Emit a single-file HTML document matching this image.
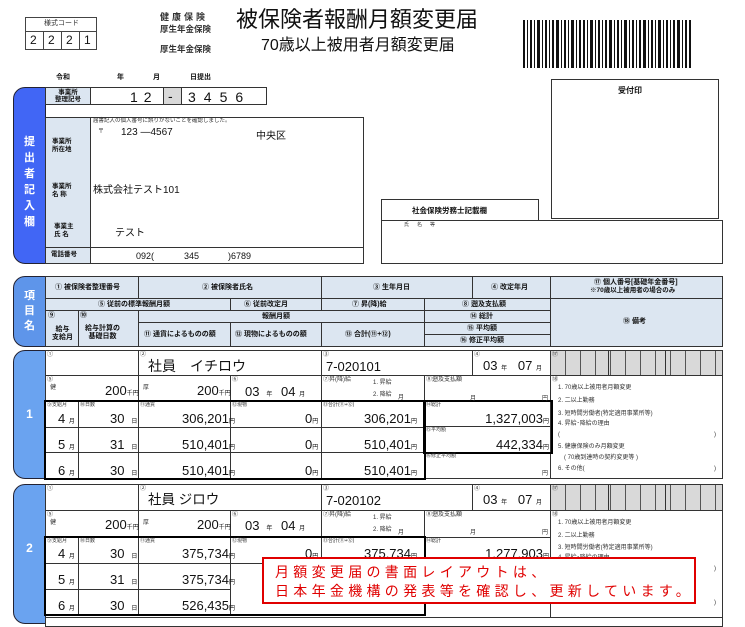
<!DOCTYPE html>
<html><head><meta charset="utf-8"><style>
*{box-sizing:border-box;margin:0;padding:0}
body{width:745px;height:618px;background:#fff;position:relative;overflow:hidden;font-family:"Liberation Sans","Noto Sans CJK JP",sans-serif;color:#111}
div{position:absolute}
.c{border:1px solid #333;background:#fff}
.h{background:#dce6f1}
.t{white-space:nowrap;font-size:7px;font-weight:bold;line-height:1}
.s{font-size:6px;line-height:1;white-space:nowrap;color:#333}
.v{font-size:14px;line-height:1;white-space:nowrap}
.n{font-size:13px;line-height:1;white-space:nowrap}
.r{font-size:13px;line-height:1;white-space:nowrap;text-align:right}
.u{font-size:6px}
.tab{border:1.5px solid #223;border-radius:12px 0 0 12px;color:#fff;font-weight:bold;text-align:center}
.g{background:#d9d9d9 repeating-linear-gradient(90deg,transparent 0 14px,#555 14px 15px)}
.thick{border:2.5px solid #000;background:transparent}
</style></head><body>

<!-- form code -->
<div class="c" style="left:25px;top:17px;width:72px;height:33px;border-color:#444"></div>
<div class="s" style="left:44px;top:20px;font-size:7px">様式コード</div>
<div style="left:25px;top:31px;width:72px;border-top:1px solid #444"></div>
<div style="left:43px;top:31px;height:18px;border-left:1px solid #444"></div>
<div style="left:61px;top:31px;height:18px;border-left:1px solid #444"></div>
<div style="left:79px;top:31px;height:18px;border-left:1px solid #444"></div>
<div class="n" style="left:30px;top:34px;font-size:12px">2</div>
<div class="n" style="left:48px;top:34px;font-size:12px">2</div>
<div class="n" style="left:66px;top:34px;font-size:12px">2</div>
<div class="n" style="left:84px;top:34px;font-size:12px">1</div>

<div class="t" style="left:160px;top:13px;font-size:9px;letter-spacing:3px;color:#333">健康保険</div>
<div class="t" style="left:160px;top:25px;font-size:8.5px;color:#333">厚生年金保険</div>
<div class="t" style="left:160px;top:45px;font-size:8.5px;color:#333">厚生年金保険</div>
<div style="left:236px;top:9px;font-size:22px;white-space:nowrap;line-height:1">被保険者報酬月額変更届</div>
<div style="left:261px;top:38px;font-size:16px;white-space:nowrap;line-height:1">70歳以上被用者月額変更届</div>

<!-- barcode -->
<svg style="position:absolute;left:523px;top:20px" width="168" height="48">
<g fill="#111">
<rect x="0" y="0" width="2" height="48"/><rect x="4" y="0" width="1" height="48"/><rect x="7" y="0" width="2" height="48"/><rect x="11" y="0" width="1" height="48"/><rect x="14" y="0" width="3" height="48"/><rect x="19" y="0" width="1" height="48"/><rect x="22" y="0" width="2" height="48"/><rect x="26" y="0" width="1" height="48"/><rect x="29" y="0" width="2" height="48"/><rect x="33" y="0" width="3" height="48"/><rect x="38" y="0" width="1" height="48"/><rect x="41" y="0" width="2" height="48"/><rect x="45" y="0" width="1" height="48"/><rect x="48" y="0" width="3" height="48"/><rect x="53" y="0" width="1" height="48"/><rect x="56" y="0" width="2" height="48"/><rect x="60" y="0" width="2" height="48"/><rect x="64" y="0" width="1" height="48"/><rect x="67" y="0" width="3" height="48"/><rect x="72" y="0" width="1" height="48"/><rect x="75" y="0" width="2" height="48"/><rect x="79" y="0" width="1" height="48"/><rect x="82" y="0" width="2" height="48"/><rect x="86" y="0" width="3" height="48"/><rect x="91" y="0" width="1" height="48"/><rect x="94" y="0" width="2" height="48"/><rect x="98" y="0" width="1" height="48"/><rect x="101" y="0" width="3" height="48"/><rect x="106" y="0" width="1" height="48"/><rect x="109" y="0" width="2" height="48"/><rect x="113" y="0" width="1" height="48"/><rect x="116" y="0" width="2" height="48"/><rect x="120" y="0" width="3" height="48"/><rect x="125" y="0" width="1" height="48"/><rect x="128" y="0" width="2" height="48"/><rect x="132" y="0" width="1" height="48"/><rect x="135" y="0" width="3" height="48"/><rect x="140" y="0" width="1" height="48"/><rect x="143" y="0" width="2" height="48"/><rect x="147" y="0" width="1" height="48"/><rect x="150" y="0" width="2" height="48"/><rect x="154" y="0" width="3" height="48"/><rect x="159" y="0" width="1" height="48"/><rect x="162" y="0" width="2" height="48"/><rect x="166" y="0" width="2" height="48"/>
</g></svg>

<div class="t" style="left:56px;top:74px">令和</div>
<div class="t" style="left:117px;top:74px">年</div>
<div class="t" style="left:153px;top:74px">月</div>
<div class="t" style="left:190px;top:74px">日提出</div>

<!-- submitter tab -->
<div class="tab" style="left:13px;top:87px;width:33px;height:177px;background:#4166f5;font-size:11px;line-height:16px;padding-top:46px">提<br>出<br>者<br>記<br>入<br>欄</div>

<div class="c h" style="left:45px;top:87px;width:46px;height:18px"></div>
<div class="t" style="left:50px;top:89px;font-size:6.5px;line-height:7px;text-align:center;width:36px">事業所<br>整理記号</div>
<div class="c" style="left:90px;top:87px;width:74px;height:18px"></div>
<div class="v" style="left:130px;top:90px;letter-spacing:6px">12</div>
<div class="c" style="left:163px;top:87px;width:19px;height:18px;background:#d9d9d9"></div>
<div class="v" style="left:168px;top:89px">-</div>
<div class="c" style="left:181px;top:87px;width:86px;height:18px"></div>
<div class="v" style="left:188px;top:90px;letter-spacing:8px">3456</div>

<div class="c" style="left:45px;top:117px;width:319px;height:147px"></div>
<div class="c h" style="left:45px;top:117px;width:46px;height:147px"></div>
<div style="left:45px;top:247px;width:319px;border-top:1px solid #333"></div>
<div class="t" style="left:52px;top:138px;line-height:8px;font-size:6.5px">事業所<br>所在地</div>
<div class="t" style="left:52px;top:183px;line-height:8px;font-size:6.5px">事業所<br>名 称</div>
<div class="t" style="left:54px;top:223px;line-height:8px;font-size:6.5px">事業主<br>氏 名</div>
<div class="t" style="left:51px;top:252px;font-size:6.5px">電話番号</div>
<div class="s" style="left:93px;top:119px;font-size:5.5px">届書記入の個人番号に誤りがないことを確認しました。</div>
<div class="s" style="left:98px;top:129px">〒</div>
<div style="left:121px;top:127px;font-size:10px;white-space:nowrap">123 ―4567</div>
<div style="left:256px;top:127px;font-size:10px;white-space:nowrap">中央区</div>
<div style="left:93px;top:181px;font-size:10px;white-space:nowrap">株式会社テスト101</div>
<div style="left:115px;top:224px;font-size:10px;white-space:nowrap">テスト</div>
<div style="left:136px;top:251px;font-size:9px;white-space:nowrap">092(</div>
<div style="left:184px;top:251px;font-size:9px;white-space:nowrap">345</div>
<div style="left:228px;top:251px;font-size:9px;white-space:nowrap">)6789</div>

<!-- stamp box -->
<div class="c" style="left:551px;top:79px;width:168px;height:140px"></div>
<div class="t" style="left:618px;top:87px;font-size:8px">受付印</div>
<div class="c" style="left:381px;top:199px;width:158px;height:23px"></div>
<div class="t" style="left:412px;top:207px;font-size:7.5px">社会保険労務士記載欄</div>
<div class="c" style="left:381px;top:220px;width:342px;height:44px"></div>
<div class="s" style="left:404px;top:223px;font-size:5px;letter-spacing:8px">氏名等</div>

<!-- header table -->
<div class="tab" style="left:13px;top:276px;width:33px;height:71px;background:#5e95ea;font-size:11px;line-height:15px;padding-top:12px">項<br>目<br>名</div>
<div class="c h" style="left:45px;top:276px;width:678px;height:71px"></div>
<div class="c h" style="left:45px;top:276px;width:94px;height:23px"></div>
<div class="c h" style="left:138px;top:276px;width:184px;height:23px"></div>
<div class="c h" style="left:321px;top:276px;width:152px;height:23px"></div>
<div class="c h" style="left:472px;top:276px;width:79px;height:23px"></div>
<div class="c h" style="left:550px;top:276px;width:173px;height:23px"></div>
<div class="c h" style="left:45px;top:298px;width:186px;height:13px"></div>
<div class="c h" style="left:230px;top:298px;width:92px;height:13px"></div>
<div class="c h" style="left:321px;top:298px;width:104px;height:13px"></div>
<div class="c h" style="left:424px;top:298px;width:127px;height:13px"></div>
<div class="c h" style="left:550px;top:298px;width:173px;height:49px"></div>
<div class="c h" style="left:45px;top:310px;width:34px;height:37px"></div>
<div class="c h" style="left:78px;top:310px;width:61px;height:37px"></div>
<div class="c h" style="left:138px;top:310px;width:287px;height:13px"></div>
<div class="c h" style="left:424px;top:310px;width:127px;height:13px"></div>
<div class="c h" style="left:138px;top:322px;width:93px;height:25px"></div>
<div class="c h" style="left:230px;top:322px;width:92px;height:25px"></div>
<div class="c h" style="left:321px;top:322px;width:104px;height:25px"></div>
<div class="c h" style="left:424px;top:322px;width:127px;height:13px"></div>
<div class="c h" style="left:424px;top:334px;width:127px;height:13px"></div>
<div class="t" style="left:55px;top:284px">① 被保険者整理番号</div>
<div class="t" style="left:202px;top:284px">② 被保険者氏名</div>
<div class="t" style="left:373px;top:284px">③ 生年月日</div>
<div class="t" style="left:491px;top:284px">④ 改定年月</div>
<div class="t" style="left:594px;top:279px">⑰ 個人番号[基礎年金番号]</div>
<div class="t" style="left:590px;top:288px;font-size:6.5px">※70歳以上被用者の場合のみ</div>
<div class="t" style="left:98px;top:301px">⑤ 従前の標準報酬月額</div>
<div class="t" style="left:244px;top:301px">⑥ 従前改定月</div>
<div class="t" style="left:352px;top:301px">⑦ 昇(降)給</div>
<div class="t" style="left:462px;top:301px">⑧ 遡及支払額</div>
<div class="t" style="left:48px;top:312px">⑨</div>
<div class="t" style="left:80px;top:312px">⑩</div>
<div class="t" style="left:262px;top:313px">報酬月額</div>
<div class="t" style="left:470px;top:313px">⑭ 総計</div>
<div class="t" style="left:52px;top:326px;line-height:8px;text-align:center">給与<br>支給月</div>
<div class="t" style="left:85px;top:325px;line-height:8px;text-align:center">給与計算の<br>基礎日数</div>
<div class="t" style="left:144px;top:331px">⑪ 通貨によるものの額</div>
<div class="t" style="left:235px;top:331px">⑫ 現物によるものの額</div>
<div class="t" style="left:345px;top:331px">⑬ 合計(⑪+⑫)</div>
<div class="t" style="left:467px;top:325px">⑮ 平均額</div>
<div class="t" style="left:460px;top:337px">⑯ 修正平均額</div>
<div class="t" style="left:623px;top:318px">⑱ 備考</div>

<!-- SECTION 1 -->
<div class="tab" style="left:13px;top:350px;width:33px;height:129px;background:#6aa3f0;font-size:12px;padding-top:56px">1</div>
<div class="c" style="left:45px;top:350px;width:94px;height:26px"></div>
<div class="c" style="left:138px;top:350px;width:184px;height:26px"></div>
<div class="c" style="left:321px;top:350px;width:152px;height:26px"></div>
<div class="c" style="left:472px;top:350px;width:79px;height:26px"></div>
<div class="c g" style="left:550px;top:350px;width:173px;height:26px"></div>
<div style="left:608px;top:350px;height:26px;border-left:1.5px solid #333"></div>
<div style="left:665px;top:350px;height:26px;border-left:1.5px solid #333"></div>
<div class="c" style="left:45px;top:375px;width:94px;height:27px"></div>
<div class="c" style="left:138px;top:375px;width:93px;height:27px"></div>
<div class="c" style="left:230px;top:375px;width:92px;height:27px"></div>
<div class="c" style="left:321px;top:375px;width:104px;height:27px"></div>
<div class="c" style="left:424px;top:375px;width:127px;height:27px"></div>
<div class="c" style="left:550px;top:375px;width:173px;height:104px"></div>
<div class="c" style="left:45px;top:401px;width:34px;height:27px"></div><div class="c" style="left:78px;top:401px;width:61px;height:27px"></div><div class="c" style="left:138px;top:401px;width:93px;height:27px"></div><div class="c" style="left:230px;top:401px;width:92px;height:27px"></div><div class="c" style="left:321px;top:401px;width:104px;height:27px"></div>
<div class="c" style="left:45px;top:427px;width:34px;height:26px"></div><div class="c" style="left:78px;top:427px;width:61px;height:26px"></div><div class="c" style="left:138px;top:427px;width:93px;height:26px"></div><div class="c" style="left:230px;top:427px;width:92px;height:26px"></div><div class="c" style="left:321px;top:427px;width:104px;height:26px"></div>
<div class="c" style="left:45px;top:452px;width:34px;height:27px"></div><div class="c" style="left:78px;top:452px;width:61px;height:27px"></div><div class="c" style="left:138px;top:452px;width:93px;height:27px"></div><div class="c" style="left:230px;top:452px;width:92px;height:27px"></div><div class="c" style="left:321px;top:452px;width:104px;height:27px"></div>
<div class="c" style="left:424px;top:401px;width:127px;height:26px"></div>
<div class="c" style="left:424px;top:426px;width:127px;height:27px"></div>
<div class="c" style="left:424px;top:452px;width:127px;height:27px"></div>
<div class="thick" style="left:44px;top:400px;width:382px;height:80px"></div>
<div class="thick" style="left:423px;top:400px;width:130px;height:54px"></div>
<div class="s" style="left:47px;top:352px">①</div><div class="s" style="left:140px;top:352px">②</div><div class="s" style="left:323px;top:352px">③</div><div class="s" style="left:474px;top:352px">④</div><div class="s" style="left:552px;top:352px">⑰</div>
<div class="v" style="left:148px;top:359px">社員　イチロウ</div>
<div class="n" style="left:326px;top:360px">7-020101</div>
<div class="n" style="left:483px;top:359px">03 <span class="u">年</span>&nbsp;&nbsp; 07 <span class="u">月</span></div>
<div class="s" style="left:47px;top:377px">⑤</div><div class="s" style="left:50px;top:385px">健</div>
<div class="n" style="left:105px;top:384px">200<span class="u">千円</span></div>
<div class="s" style="left:143px;top:385px">厚</div>
<div class="n" style="left:197px;top:384px">200<span class="u">千円</span></div>
<div class="s" style="left:232px;top:377px">⑥</div>
<div class="n" style="left:245px;top:385px">03 <span class="u">&nbsp;&nbsp;年&nbsp;&nbsp;&nbsp;</span> 04 <span class="u">月</span></div>
<div class="s" style="left:323px;top:377px">⑦昇(降)給</div><div class="s" style="left:373px;top:380px">1. 昇給</div><div class="s" style="left:373px;top:392px">2. 降給</div><div class="s" style="left:398px;top:395px">月</div>
<div class="s" style="left:426px;top:377px">⑧遡及支払額</div><div class="s" style="left:470px;top:396px">月</div><div class="s" style="left:542px;top:396px">円</div>
<div class="s" style="left:552px;top:377px">⑱</div>
<div class="s" style="left:558px;top:385px">1. 70歳以上被用者月額変更</div>
<div class="s" style="left:558px;top:398px">2. 二以上勤務</div>
<div class="s" style="left:558px;top:411px">3. 短時間労働者(特定適用事業所等)</div>
<div class="s" style="left:558px;top:421px">4. 昇給･降給の理由</div>
<div class="s" style="left:558px;top:432px">(</div><div class="s" style="left:714px;top:432px">)</div>
<div class="s" style="left:558px;top:444px">5. 健康保険のみ月額変更</div>
<div class="s" style="left:564px;top:455px">( 70歳到達時の契約変更等 )</div>
<div class="s" style="left:558px;top:466px">6. その他(</div><div class="s" style="left:714px;top:466px">)</div>
<div class="s" style="left:47px;top:403px;font-size:5px">⑨支給月</div><div class="s" style="left:80px;top:403px;font-size:5px">⑩日数</div><div class="s" style="left:140px;top:403px;font-size:5px">⑪通貨</div><div class="s" style="left:232px;top:403px;font-size:5px">⑫現物</div><div class="s" style="left:323px;top:403px;font-size:5px">⑬合計(⑪+⑫)</div><div class="s" style="left:426px;top:403px;font-size:5px">⑭総計</div>
<div class="n" style="left:58px;top:412px">4 <span class="u">月</span></div><div class="n" style="left:110px;top:412px">30 <span class="u">&nbsp;&nbsp;日</span></div>
<div class="n" style="left:182px;top:412px">306,201<span class="u">円</span></div><div class="n" style="left:305px;top:412px">0<span class="u">円</span></div><div class="n" style="left:364px;top:412px">306,201<span class="u">円</span></div>
<div class="r" style="right:196px;top:412px">1,327,003<span class="u">円</span></div>
<div class="s" style="left:426px;top:428px;font-size:5px">⑮平均額</div>
<div class="n" style="left:58px;top:438px">5 <span class="u">月</span></div><div class="n" style="left:110px;top:438px">31 <span class="u">&nbsp;&nbsp;日</span></div>
<div class="n" style="left:182px;top:438px">510,401<span class="u">円</span></div><div class="n" style="left:305px;top:438px">0<span class="u">円</span></div><div class="n" style="left:364px;top:438px">510,401<span class="u">円</span></div>
<div class="r" style="right:196px;top:438px">442,334<span class="u">円</span></div>
<div class="s" style="left:426px;top:454px;font-size:5px">⑯修正平均額</div><div class="s" style="left:542px;top:471px">円</div>
<div class="n" style="left:58px;top:464px">6 <span class="u">月</span></div><div class="n" style="left:110px;top:464px">30 <span class="u">&nbsp;&nbsp;日</span></div>
<div class="n" style="left:182px;top:464px">510,401<span class="u">円</span></div><div class="n" style="left:305px;top:464px">0<span class="u">円</span></div><div class="n" style="left:364px;top:464px">510,401<span class="u">円</span></div>

<!-- SECTION 2 -->
<div class="tab" style="left:13px;top:484px;width:33px;height:140px;background:#6aa3f0;font-size:12px;padding-top:56px">2</div>
<div class="c" style="left:45px;top:484px;width:94px;height:27px"></div>
<div class="c" style="left:138px;top:484px;width:184px;height:27px"></div>
<div class="c" style="left:321px;top:484px;width:152px;height:27px"></div>
<div class="c" style="left:472px;top:484px;width:79px;height:27px"></div>
<div class="c g" style="left:550px;top:484px;width:173px;height:27px"></div>
<div style="left:608px;top:484px;height:27px;border-left:1.5px solid #333"></div>
<div style="left:665px;top:484px;height:27px;border-left:1.5px solid #333"></div>
<div class="c" style="left:45px;top:510px;width:94px;height:28px"></div>
<div class="c" style="left:138px;top:510px;width:93px;height:28px"></div>
<div class="c" style="left:230px;top:510px;width:92px;height:28px"></div>
<div class="c" style="left:321px;top:510px;width:104px;height:28px"></div>
<div class="c" style="left:424px;top:510px;width:127px;height:28px"></div>
<div class="c" style="left:550px;top:510px;width:173px;height:110px"></div>
<div class="c" style="left:45px;top:537px;width:34px;height:27px"></div><div class="c" style="left:78px;top:537px;width:61px;height:27px"></div><div class="c" style="left:138px;top:537px;width:93px;height:27px"></div><div class="c" style="left:230px;top:537px;width:92px;height:27px"></div><div class="c" style="left:321px;top:537px;width:104px;height:27px"></div>
<div class="c" style="left:45px;top:563px;width:34px;height:27px"></div><div class="c" style="left:78px;top:563px;width:61px;height:27px"></div><div class="c" style="left:138px;top:563px;width:93px;height:27px"></div>
<div class="c" style="left:45px;top:589px;width:34px;height:26px"></div><div class="c" style="left:78px;top:589px;width:61px;height:26px"></div><div class="c" style="left:138px;top:589px;width:93px;height:26px"></div>
<div class="c" style="left:424px;top:537px;width:127px;height:27px"></div>
<div class="thick" style="left:44px;top:536px;width:382px;height:80px"></div>
<div class="c" style="left:45px;top:617px;width:678px;height:10px"></div>
<div class="s" style="left:47px;top:486px">①</div><div class="s" style="left:140px;top:486px">②</div><div class="s" style="left:323px;top:486px">③</div><div class="s" style="left:474px;top:486px">④</div><div class="s" style="left:552px;top:486px">⑰</div>
<div class="n" style="left:148px;top:493px;font-size:13.5px">社員 ジロウ</div>
<div class="n" style="left:326px;top:494px">7-020102</div>
<div class="n" style="left:483px;top:493px">03 <span class="u">年</span>&nbsp;&nbsp; 07 <span class="u">月</span></div>
<div class="s" style="left:47px;top:512px">⑤</div><div class="s" style="left:50px;top:520px">健</div>
<div class="n" style="left:105px;top:518px">200<span class="u">千円</span></div>
<div class="s" style="left:143px;top:520px">厚</div>
<div class="n" style="left:197px;top:518px">200<span class="u">千円</span></div>
<div class="s" style="left:232px;top:512px">⑥</div>
<div class="n" style="left:245px;top:519px">03 <span class="u">&nbsp;&nbsp;年&nbsp;&nbsp;&nbsp;</span> 04 <span class="u">月</span></div>
<div class="s" style="left:323px;top:512px">⑦昇(降)給</div><div class="s" style="left:373px;top:515px">1. 昇給</div><div class="s" style="left:373px;top:527px">2. 降給</div><div class="s" style="left:398px;top:530px">月</div>
<div class="s" style="left:426px;top:512px">⑧遡及支払額</div><div class="s" style="left:470px;top:530px">月</div><div class="s" style="left:542px;top:530px">円</div>
<div class="s" style="left:552px;top:512px">⑱</div>
<div class="s" style="left:558px;top:520px">1. 70歳以上被用者月額変更</div>
<div class="s" style="left:558px;top:533px">2. 二以上勤務</div>
<div class="s" style="left:558px;top:545px">3. 短時間労働者(特定適用事業所等)</div>
<div class="s" style="left:558px;top:555px">4. 昇給･降給の理由</div>
<div class="s" style="left:714px;top:566px">)</div><div class="s" style="left:714px;top:600px">)</div>
<div class="s" style="left:47px;top:539px;font-size:5px">⑨支給月</div><div class="s" style="left:80px;top:539px;font-size:5px">⑩日数</div><div class="s" style="left:140px;top:539px;font-size:5px">⑪通貨</div><div class="s" style="left:232px;top:539px;font-size:5px">⑫現物</div><div class="s" style="left:323px;top:539px;font-size:5px">⑬合計(⑪+⑫)</div><div class="s" style="left:426px;top:539px;font-size:5px">⑭総計</div>
<div class="n" style="left:58px;top:547px">4 <span class="u">月</span></div><div class="n" style="left:110px;top:547px">30 <span class="u">&nbsp;&nbsp;日</span></div>
<div class="n" style="left:182px;top:547px">375,734<span class="u">円</span></div><div class="n" style="left:305px;top:547px">0<span class="u">円</span></div><div class="n" style="left:364px;top:547px">375,734<span class="u">円</span></div>
<div class="r" style="right:196px;top:547px">1,277,903<span class="u">円</span></div>
<div class="n" style="left:58px;top:573px">5 <span class="u">月</span></div><div class="n" style="left:110px;top:573px">31 <span class="u">&nbsp;&nbsp;日</span></div>
<div class="n" style="left:182px;top:573px">375,734<span class="u">円</span></div>
<div class="n" style="left:58px;top:599px">6 <span class="u">月</span></div><div class="n" style="left:110px;top:599px">30 <span class="u">&nbsp;&nbsp;日</span></div>
<div class="n" style="left:182px;top:599px">526,435<span class="u">円</span></div>

<!-- red notice -->
<div style="left:262px;top:557px;width:434px;height:47px;border:2px solid #e00000;background:#fff;color:#e00000;font-size:14px;line-height:19px;padding:4px 0 0 11px;letter-spacing:4.3px;white-space:nowrap">月額変更届の書面レイアウトは、<br>日本年金機構の発表等を確認し、更新しています。</div>
</body></html>
